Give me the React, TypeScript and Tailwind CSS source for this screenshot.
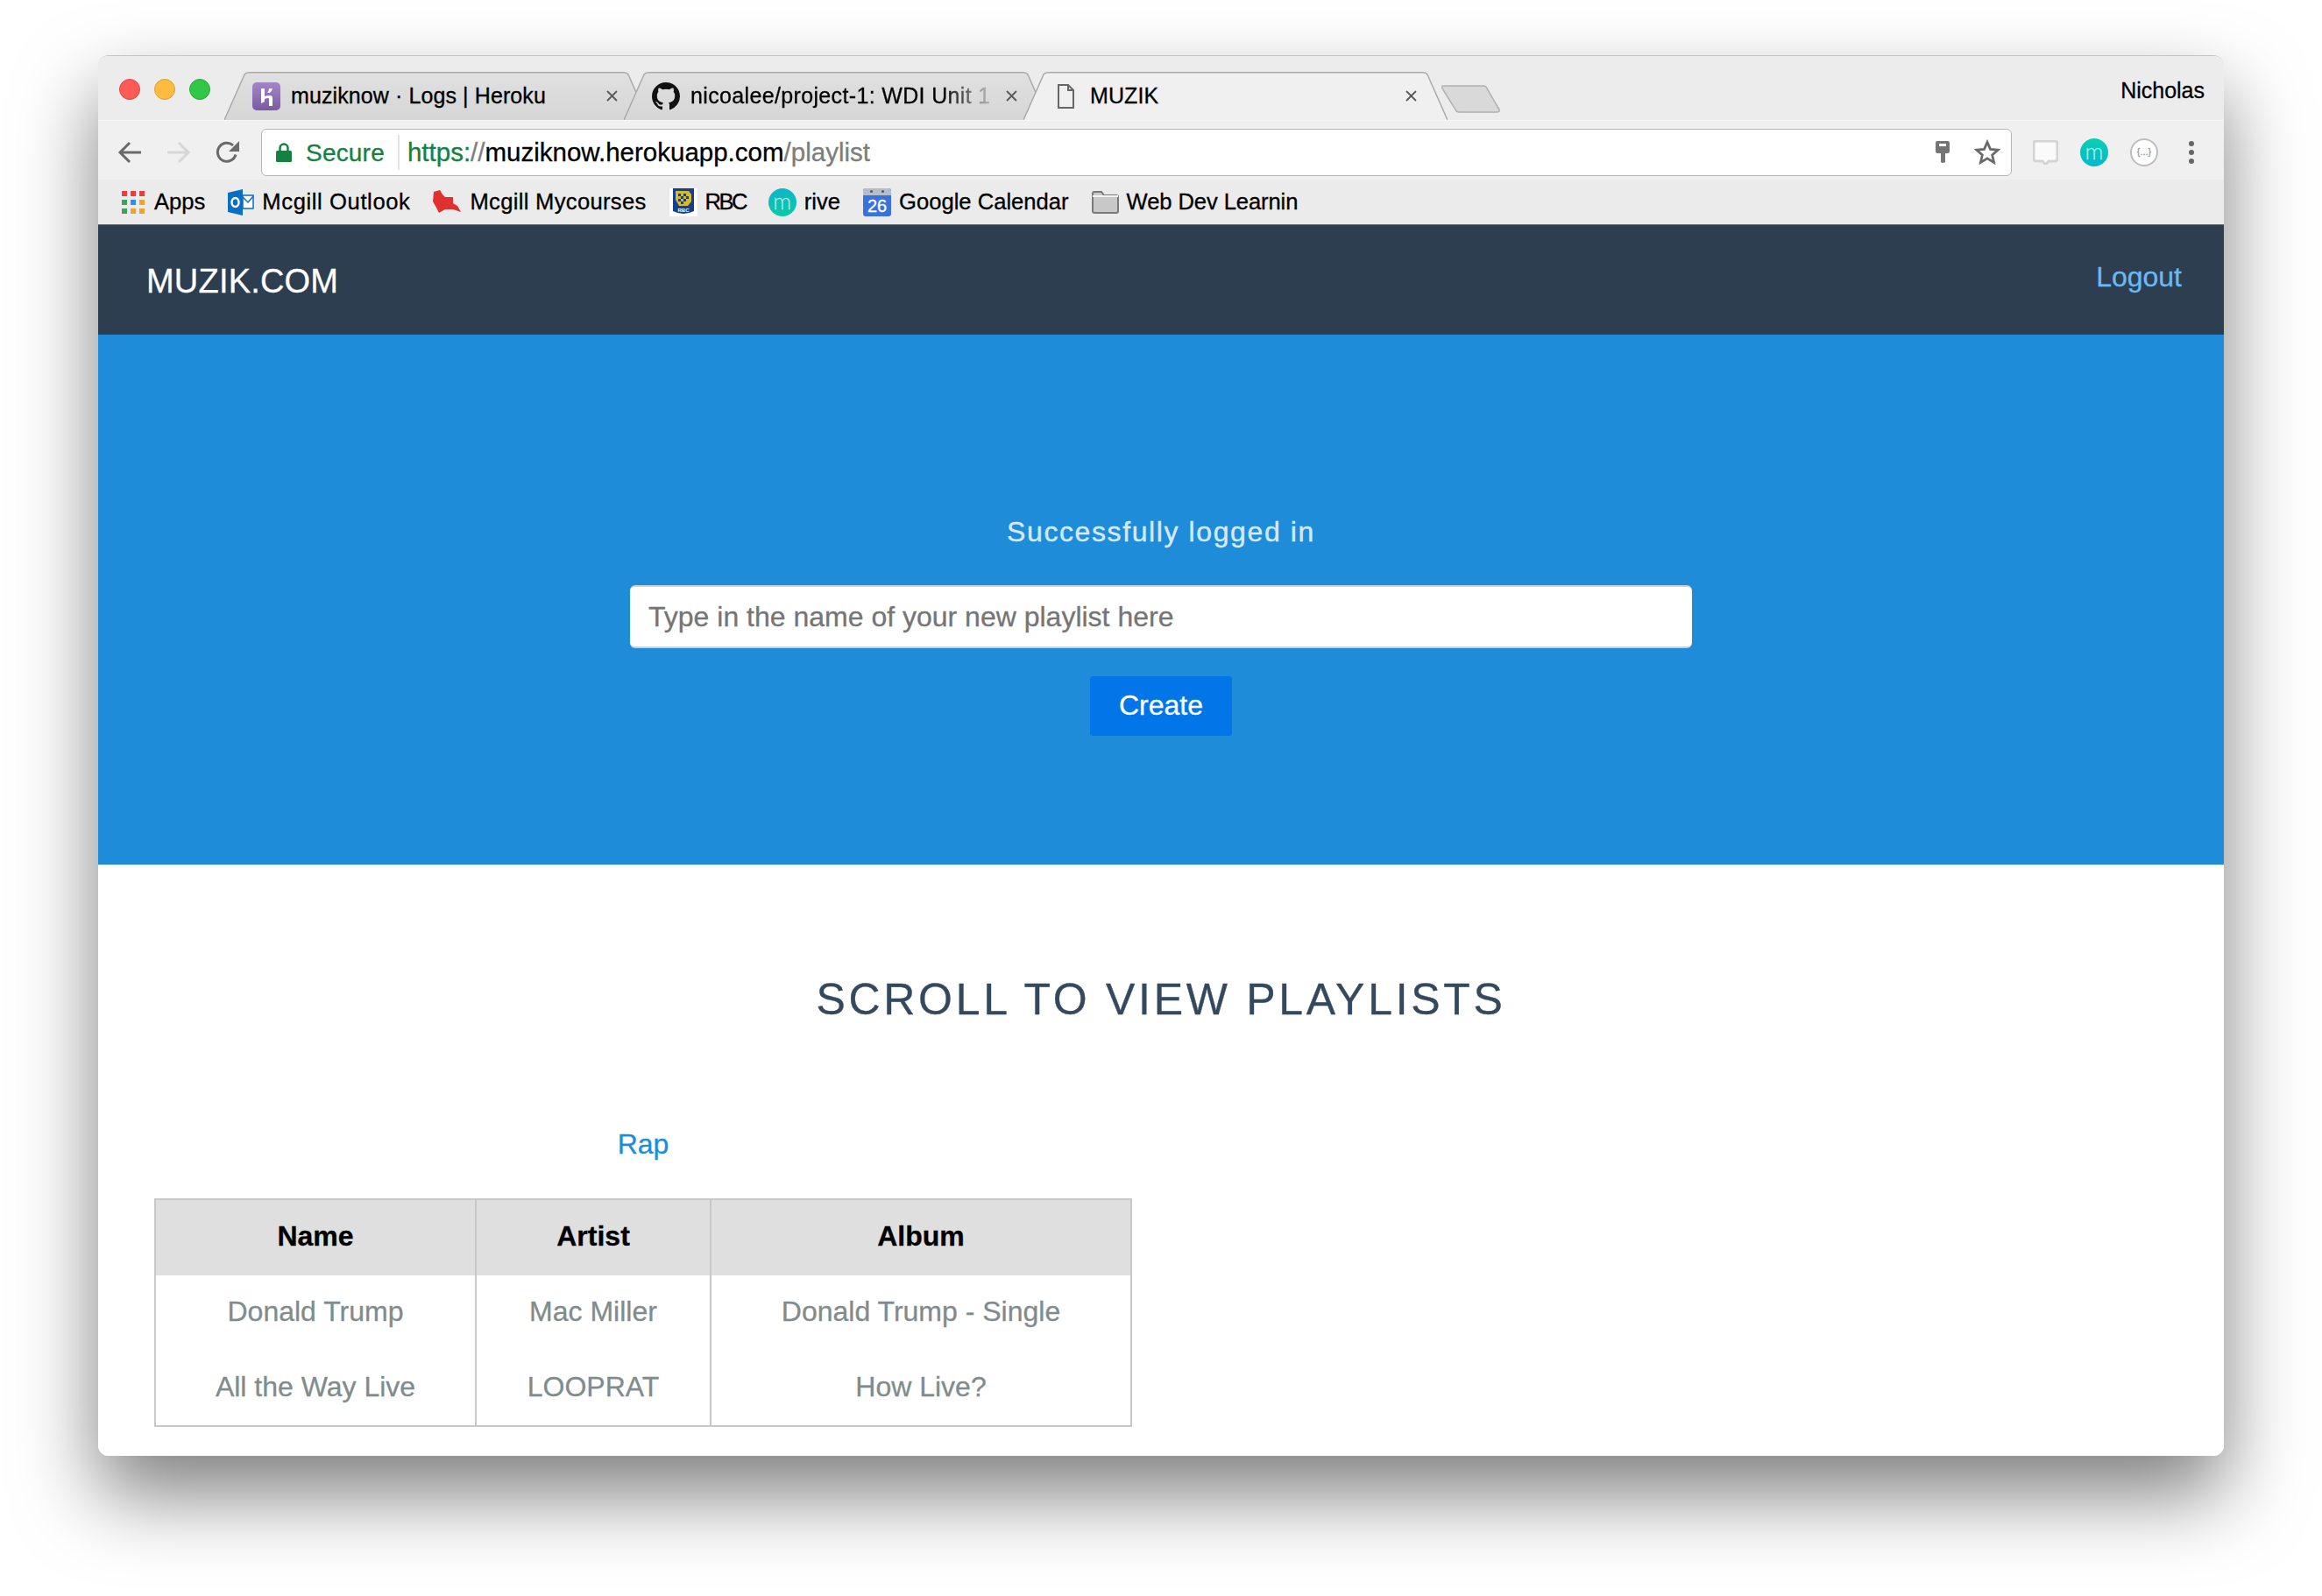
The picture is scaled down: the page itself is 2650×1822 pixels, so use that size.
import type { ReactNode } from 'react'

const FONT = "font-['Liberation_Sans',Arial,sans-serif]"

const TRACK_ROWS = [
  { name: 'Donald Trump', artist: 'Mac Miller', album: 'Donald Trump - Single' },
  { name: 'All the Way Live', artist: 'LOOPRAT', album: 'How Live?' },
]

function TrafficLights() {
  return (
    <div className="flex gap-4 pt-[26px] pl-6 w-[144px] shrink-0">
      <div className="w-6 h-6 rounded-full bg-[#fc5b57] border border-[#e2463f]" />
      <div className="w-6 h-6 rounded-full bg-[#fdbc40] border border-[#de9f34]" />
      <div className="w-6 h-6 rounded-full bg-[#33c748] border border-[#27aa35]" />
    </div>
  )
}

function CloseIcon() {
  return (
    <svg width="13" height="13" viewBox="0 0 13 13" className="shrink-0">
      <path d="M1 1l11 11M12 1L1 12" stroke="#5a5a5a" strokeWidth="1.8" />
    </svg>
  )
}

function Tab({
  active,
  icon,
  label,
  fade,
  iconPad,
}: {
  active?: boolean
  icon: ReactNode
  label: string
  fade?: boolean
  iconPad: string
}) {
  return (
    <div className={`relative w-[484px] h-[55px] -ml-[28px] first:ml-0 shrink-0 ${active ? 'z-10' : ''}`}>
      <svg viewBox="0 0 484 55" className="absolute inset-0 w-full h-full">
        <defs>
          <linearGradient id="tabBg" x1="0" y1="0" x2="0" y2="1">
            <stop offset="0" stopColor="#e0e0e0" />
            <stop offset="1" stopColor="#d6d6d6" />
          </linearGradient>
        </defs>
        <path
          d="M0 55L23 3Q24.5 0.8 28 0.8L456 0.8Q459.5 0.8 461 3L484 55"
          fill={active ? '#f0f0f0' : 'url(#tabBg)'}
          stroke="#a9a9a9"
          strokeWidth="1.5"
        />
      </svg>
      <div className="relative flex items-center h-full">
        <div className={`${iconPad} flex items-center w-[76px] shrink-0`}>{icon}</div>
        <div
          className={`w-[342px] shrink-0 overflow-hidden whitespace-nowrap text-[25px] leading-[55px] text-black ${
            fade
              ? 'tracking-[0.35px] [mask-image:linear-gradient(to_right,black_84%,rgba(0,0,0,0.15)_100%)]'
              : 'tracking-[0.1px]'
          }`}
        >
          {label}
        </div>
        <div className="ml-[18px]">
          <CloseIcon />
        </div>
      </div>
    </div>
  )
}

function TabStrip() {
  return (
    <div className="flex h-[73px] bg-[#ececec]">
      <TrafficLights />
      <div className="flex pt-[18px]">
        <Tab
          iconPad="pl-8"
          label="muziknow · Logs | Heroku"
          icon={
            <svg width="32" height="32" viewBox="0 0 32 32">
              <defs>
                <linearGradient id="herokuBg" x1="0" y1="0" x2="0" y2="1">
                  <stop offset="0" stopColor="#a585c9" />
                  <stop offset="1" stopColor="#7a5aa3" />
                </linearGradient>
              </defs>
              <rect width="32" height="32" rx="5" fill="url(#herokuBg)" />
              <path d="M10 7h4v9q3-1 6-1 3 0 3 3v9h-4v-8q0-1-1-1-2 0-4 1v3l-4 2zM19 7h4q-1 3-3 5h-3q2-2 2-5z" fill="#fff" />
            </svg>
          }
        />
        <Tab
          iconPad="pl-8"
          fade
          label="nicoalee/project-1: WDI Unit 1"
          icon={
            <svg width="32" height="32" viewBox="0 0 16 16">
              <path
                fill="#111"
                d="M8 0C3.58 0 0 3.58 0 8c0 3.54 2.29 6.53 5.47 7.59.4.07.55-.17.55-.38 0-.19-.01-.82-.01-1.49-2.01.37-2.53-.49-2.69-.94-.09-.23-.48-.94-.82-1.13-.28-.15-.68-.52-.01-.53.63-.01 1.08.58 1.23.82.72 1.21 1.87.87 2.33.66.07-.52.28-.87.51-1.07-1.78-.2-3.64-.89-3.64-3.95 0-.87.31-1.59.82-2.15-.08-.2-.36-1.02.08-2.12 0 0 .67-.21 2.2.82.64-.18 1.32-.27 2-.27.68 0 1.36.09 2 .27 1.53-1.04 2.2-.82 2.2-.82.44 1.1.16 1.92.08 2.12.51.56.82 1.27.82 2.15 0 3.07-1.87 3.75-3.65 3.95.29.25.54.73.54 1.48 0 1.07-.01 1.93-.01 2.2 0 .21.15.46.55.38A8.013 8.013 0 0016 8c0-4.42-3.58-8-8-8z"
              />
            </svg>
          }
        />
        <Tab
          active
          iconPad="pl-[39px]"
          label="MUZIK"
          icon={
            <svg width="19" height="28" viewBox="0 0 19 28" fill="none" stroke="#666" strokeWidth="2">
              <path d="M1 1h11l6 6v20H1zM12 1v6h6" />
            </svg>
          }
        />
        <svg width="68" height="32" viewBox="0 0 68 32" className="-ml-[7px] mt-[15px] shrink-0">
          <path d="M2 1h46q3 0 4 3l14 24q1 3-3 3H20q-3 0-4-3L1 4q-1-3 1-3z" fill="#d9d9d9" stroke="#b0b0b0" strokeWidth="1.5" />
        </svg>
      </div>
      <div className="ml-auto pr-[22px] pt-[24px] text-[25px] leading-[30px] text-black">Nicholas</div>
    </div>
  )
}

function Toolbar() {
  return (
    <div className="flex items-center h-[68px] pt-[4px] bg-[#f0f0f0] border-t border-[#f6f6f6]">
      <div className="flex items-center pl-[22px] w-[186px] shrink-0 gap-[28px]">
        <svg width="28" height="26" viewBox="0 0 28 26" fill="none" stroke="#6a6a6a" strokeWidth="3">
          <path d="M27 13H3M14 2L3 13l11 11" />
        </svg>
        <svg width="28" height="26" viewBox="0 0 28 26" fill="none" stroke="#d6d6d6" strokeWidth="3">
          <path d="M1 13h24M14 2l11 11-11 11" />
        </svg>
        <svg width="28" height="28" viewBox="0 0 28 28" fill="none" className="shrink-0">
          <path d="M23 16.5A10.5 10.5 0 1 1 20 6" stroke="#6a6a6a" strokeWidth="3" />
          <path d="M27 1v12H15z" fill="#6a6a6a" />
        </svg>
      </div>
      <div className="flex items-center w-[1998px] h-[54px] shrink-0 rounded-[6px] bg-white border border-[#b5b5b5]">
        <svg width="18" height="22" viewBox="0 0 18 22" className="ml-4 shrink-0">
          <path d="M4.5 9V6a4.5 4.5 0 0 1 9 0v3" fill="none" stroke="#15803f" strokeWidth="2.5" />
          <rect y="9" width="18" height="13" rx="1.5" fill="#15803f" />
        </svg>
        <span className="ml-4 pt-[2px] text-[28px] text-[#15803f] tracking-[0.2px]">Secure</span>
        <div className="ml-[15px] h-10 w-[2px] bg-[#e2e2e2]" />
        <div className="ml-[9px] pt-[2px] flex-1 whitespace-nowrap text-[29.5px]">
          <span className="text-[#15803f]">https:</span>
          <span className="text-[#7d7d7d]">//</span>
          <span className="text-black">muziknow.herokuapp.com</span>
          <span className="text-[#7d7d7d]">/playlist</span>
        </div>
        <svg width="16" height="25" viewBox="0 0 16 25" className="mr-[28px] shrink-0">
          <path d="M2 0h12q2 0 2 2v10q0 2-2 2h-3v10q-3 2-5 0V14H2q-2 0-2-2V2q0-2 2-2z" fill="#757575" />
          <rect x="4" y="3" width="8" height="3" fill="#fff" />
        </svg>
        <svg width="30" height="29" viewBox="0 0 24 23" fill="none" stroke="#6a6a6a" strokeWidth="2.2" className="mr-3 shrink-0">
          <path d="M12 2.5l2.8 6.5 7 .6-5.3 4.6 1.6 6.9-6.1-3.7-6.1 3.7 1.6-6.9-5.3-4.6 7-.6z" />
        </svg>
      </div>
      <div className="flex items-center pl-6 gap-[25px]">
        <svg width="29" height="28" viewBox="0 0 29 28" className="shrink-0">
          <path d="M4 1h21q3 0 3 3v17q0 3-3 3h-7l-3.5 4-3.5-4H4q-3 0-3-3V4q0-3 3-3z" fill="#fafafa" stroke="#d4d4d4" strokeWidth="3" />
        </svg>
        <div className="w-8 h-8 rounded-full bg-gradient-to-b from-[#0bd0b0] to-[#08b7cf] flex items-center justify-center font-['Lato'] font-light text-[26px] leading-none text-white/60 pb-[4px]">
          m
        </div>
        <div className="w-8 h-8 rounded-full bg-white border-2 border-[#bdbdbd] flex items-center justify-center text-[11px] text-[#9a9a9a] leading-none">
          {'{...}'}
        </div>
        <div className="flex flex-col gap-1 ml-[10px]">
          <div className="w-[6px] h-[6px] rounded-full bg-[#666]" />
          <div className="w-[6px] h-[6px] rounded-full bg-[#666]" />
          <div className="w-[6px] h-[6px] rounded-full bg-[#666]" />
        </div>
      </div>
    </div>
  )
}

function Bookmark({ icon, label, labelClass = '' }: { icon: ReactNode; label: string; labelClass?: string }) {
  return (
    <div className="flex items-center gap-[9px]">
      {icon}
      <span className={`text-[25.6px] leading-none text-black whitespace-nowrap ${labelClass}`}>{label}</span>
    </div>
  )
}

function AppsIcon() {
  const colors = ['#ef3b3b', '#ef3b3b', '#ef3b3b', '#3ca35c', '#2f8ff0', '#f0a22e', '#3ca35c', '#f0a22e', '#f0a22e']
  return (
    <div className="grid grid-cols-3 gap-1 w-[26px] shrink-0">
      {colors.map((c, i) => (
        <div key={i} className="h-[6px]" style={{ backgroundColor: c }} />
      ))}
    </div>
  )
}

function BookmarkBar() {
  return (
    <div className="flex items-center gap-[26px] h-[52px] pl-[27px] bg-[#ebebeb] border-b border-[#5f6972]">
      <Bookmark label="Apps" labelClass="ml-[2px]" icon={<AppsIcon />} />
      <Bookmark
        label="Mcgill Outlook"
        labelClass="tracking-[0.6px]"
        icon={
          <svg width="30" height="30" viewBox="0 0 30 30" className="shrink-0">
            <path d="M17 7h12v15H17z" fill="#fff" stroke="#0a6fc2" strokeWidth="1.5" />
            <path d="M17 9l6 6 6-7" fill="none" stroke="#0a6fc2" strokeWidth="1.5" />
            <path d="M0 4l17-4v30L0 26z" fill="#0a6fc2" />
            <ellipse cx="8.5" cy="15" rx="4" ry="5" fill="none" stroke="#fff" strokeWidth="2.5" />
          </svg>
        }
      />
      <Bookmark
        label="Mcgill Mycourses"
        labelClass="tracking-[0.3px]"
        icon={
          <svg width="33" height="28" viewBox="0 0 33 28" className="shrink-0">
            <path d="M1 2l7-2 3 5 3 3h9v7l5 3 4 7-9-3h-9l-7 4-3-6-4-7z" fill="#e0302f" />
          </svg>
        }
      />
      <Bookmark
        label="RBC"
        labelClass="tracking-[-2.6px]"
        icon={
          <svg width="32" height="32" viewBox="0 0 32 32" className="shrink-0">
            <rect width="32" height="32" fill="#fff" />
            <path d="M4 0h24v26q-12 6-24 0z" fill="#12418c" />
            <path d="M7 3h15l3 4v8l-4 5H11l-4-7z" fill="#d8b92d" />
            <path d="M10 6h3v3h-3zM16 6h3v3h-3zM13 9h3v3h-3zM19 9h3v3h-3zM10 12h3v3h-3zM16 12h3v3h-3zM13 15h3v3h-3z" fill="#12418c" />
            <text x="16" y="27" textAnchor="middle" fontSize="6" fontWeight="700" fill="#fff">RBC</text>
          </svg>
        }
      />
      <Bookmark
        label="rive"
        icon={
          <div className="w-8 h-8 shrink-0 rounded-full bg-gradient-to-b from-[#10b5c8] to-[#0bc9a5] flex items-center justify-center font-['Lato'] font-light text-[26px] leading-none text-white/60 pb-[4px]">
            m
          </div>
        }
      />
      <Bookmark
        label="Google Calendar"
        icon={
          <div className="relative w-8 h-8 shrink-0 rounded-[3px] bg-[#3b71dd] flex items-end justify-center text-[20px] leading-[24px] text-white">
            26
            <div className="absolute top-0 inset-x-0 h-[8px] bg-[#b5bdc8] rounded-t-[3px] flex items-center justify-center gap-[10px]">
              <div className="w-[3px] h-[3px] rounded-full bg-[#555]" />
              <div className="w-[3px] h-[3px] rounded-full bg-[#555]" />
            </div>
          </div>
        }
      />
      <Bookmark
        label="Web Dev Learnin"
        labelClass="tracking-[-0.1px]"
        icon={
          <svg width="31" height="26" viewBox="0 0 31 26" className="shrink-0">
            <path d="M1 3q0-2 2-2h8l3 4h14q2 0 2 2v16q0 2-2 2H3q-2 0-2-2z" fill="#c8c8c8" stroke="#7a7a7a" strokeWidth="2" />
            <path d="M1 6h29" stroke="#f4f4f4" strokeWidth="2" />
          </svg>
        }
      />
    </div>
  )
}

function Navbar() {
  return (
    <nav className="flex items-center justify-between h-[125px] pl-[55px] pr-[48px] bg-[#2c3e50]">
      <span className="pt-[3px] text-[38px] tracking-[0.2px] text-white">MUZIK.COM</span>
      <a className="pb-[8px] text-[32px] text-[#6bb9f0]">Logout</a>
    </nav>
  )
}

function Hero() {
  return (
    <section className="flex flex-col items-center h-[605px] pt-[205px] bg-[#1e8cd8]">
      <p className="text-[32px] leading-[40px] tracking-[1.6px] text-white/80">Successfully logged in</p>
      <div className="mt-[41px] flex items-center w-[1212px] h-[72px] rounded-[6px] bg-white border-t-2 border-b-2 border-[#cfcfcf] px-[21px]">
        <span className="text-[32px] text-[#757575]">Type in the name of your new playlist here</span>
      </div>
      <button className="mt-8 w-[162px] h-[68px] pb-[2px] rounded-[3px] bg-[#0275e8] text-[32px] text-white">Create</button>
    </section>
  )
}

function Playlists() {
  return (
    <section className="bg-white h-[675px] pt-[125px]">
      <h2 className="text-center text-[50px] leading-[58px] tracking-[3.7px] text-[#34495e]">SCROLL TO VIEW PLAYLISTS</h2>
      <div className="ml-[64px] w-[1116px] mt-[114px]">
        <a className="block text-center text-[32px] leading-[44px] text-[#1e8cd8]">Rap</a>
        <table className="mt-[40px] w-full border-collapse border-2 border-[#c8c8c8] text-[32px] text-center table-fixed">
          <colgroup>
            <col className="w-[366px]" />
            <col className="w-[268px]" />
            <col />
          </colgroup>
          <thead>
            <tr className="h-[87px] bg-[#dfdfdf] text-black">
              <th className="pb-1 border-x-2 border-[#c8c8c8]">Name</th>
              <th className="pb-1 border-x-2 border-[#c8c8c8]">Artist</th>
              <th className="pb-1 border-x-2 border-[#c8c8c8]">Album</th>
            </tr>
          </thead>
          <tbody>
            {TRACK_ROWS.map((row) => (
              <tr key={row.name} className="h-[86px] text-[#7f8c8d]">
                <td className="pb-1 border-x-2 border-[#c8c8c8]">{row.name}</td>
                <td className="pb-1 border-x-2 border-[#c8c8c8]">{row.artist}</td>
                <td className="pb-1 border-x-2 border-[#c8c8c8]">{row.album}</td>
              </tr>
            ))}
          </tbody>
        </table>
      </div>
    </section>
  )
}

export default function App() {
  return (
    <div className={`${FONT} [-webkit-text-stroke:0.3px_currentColor] w-[2650px] h-[1822px] overflow-hidden bg-white pl-[112px] pt-[63px]`}>
      <div className="w-[2426px] h-[1599px] rounded-[12px] overflow-hidden border-t border-[#c4c4c4] shadow-[0_44px_90px_rgba(0,0,0,0.5)]">
        <TabStrip />
        <Toolbar />
        <BookmarkBar />
        <Navbar />
        <Hero />
        <Playlists />
      </div>
    </div>
  )
}
